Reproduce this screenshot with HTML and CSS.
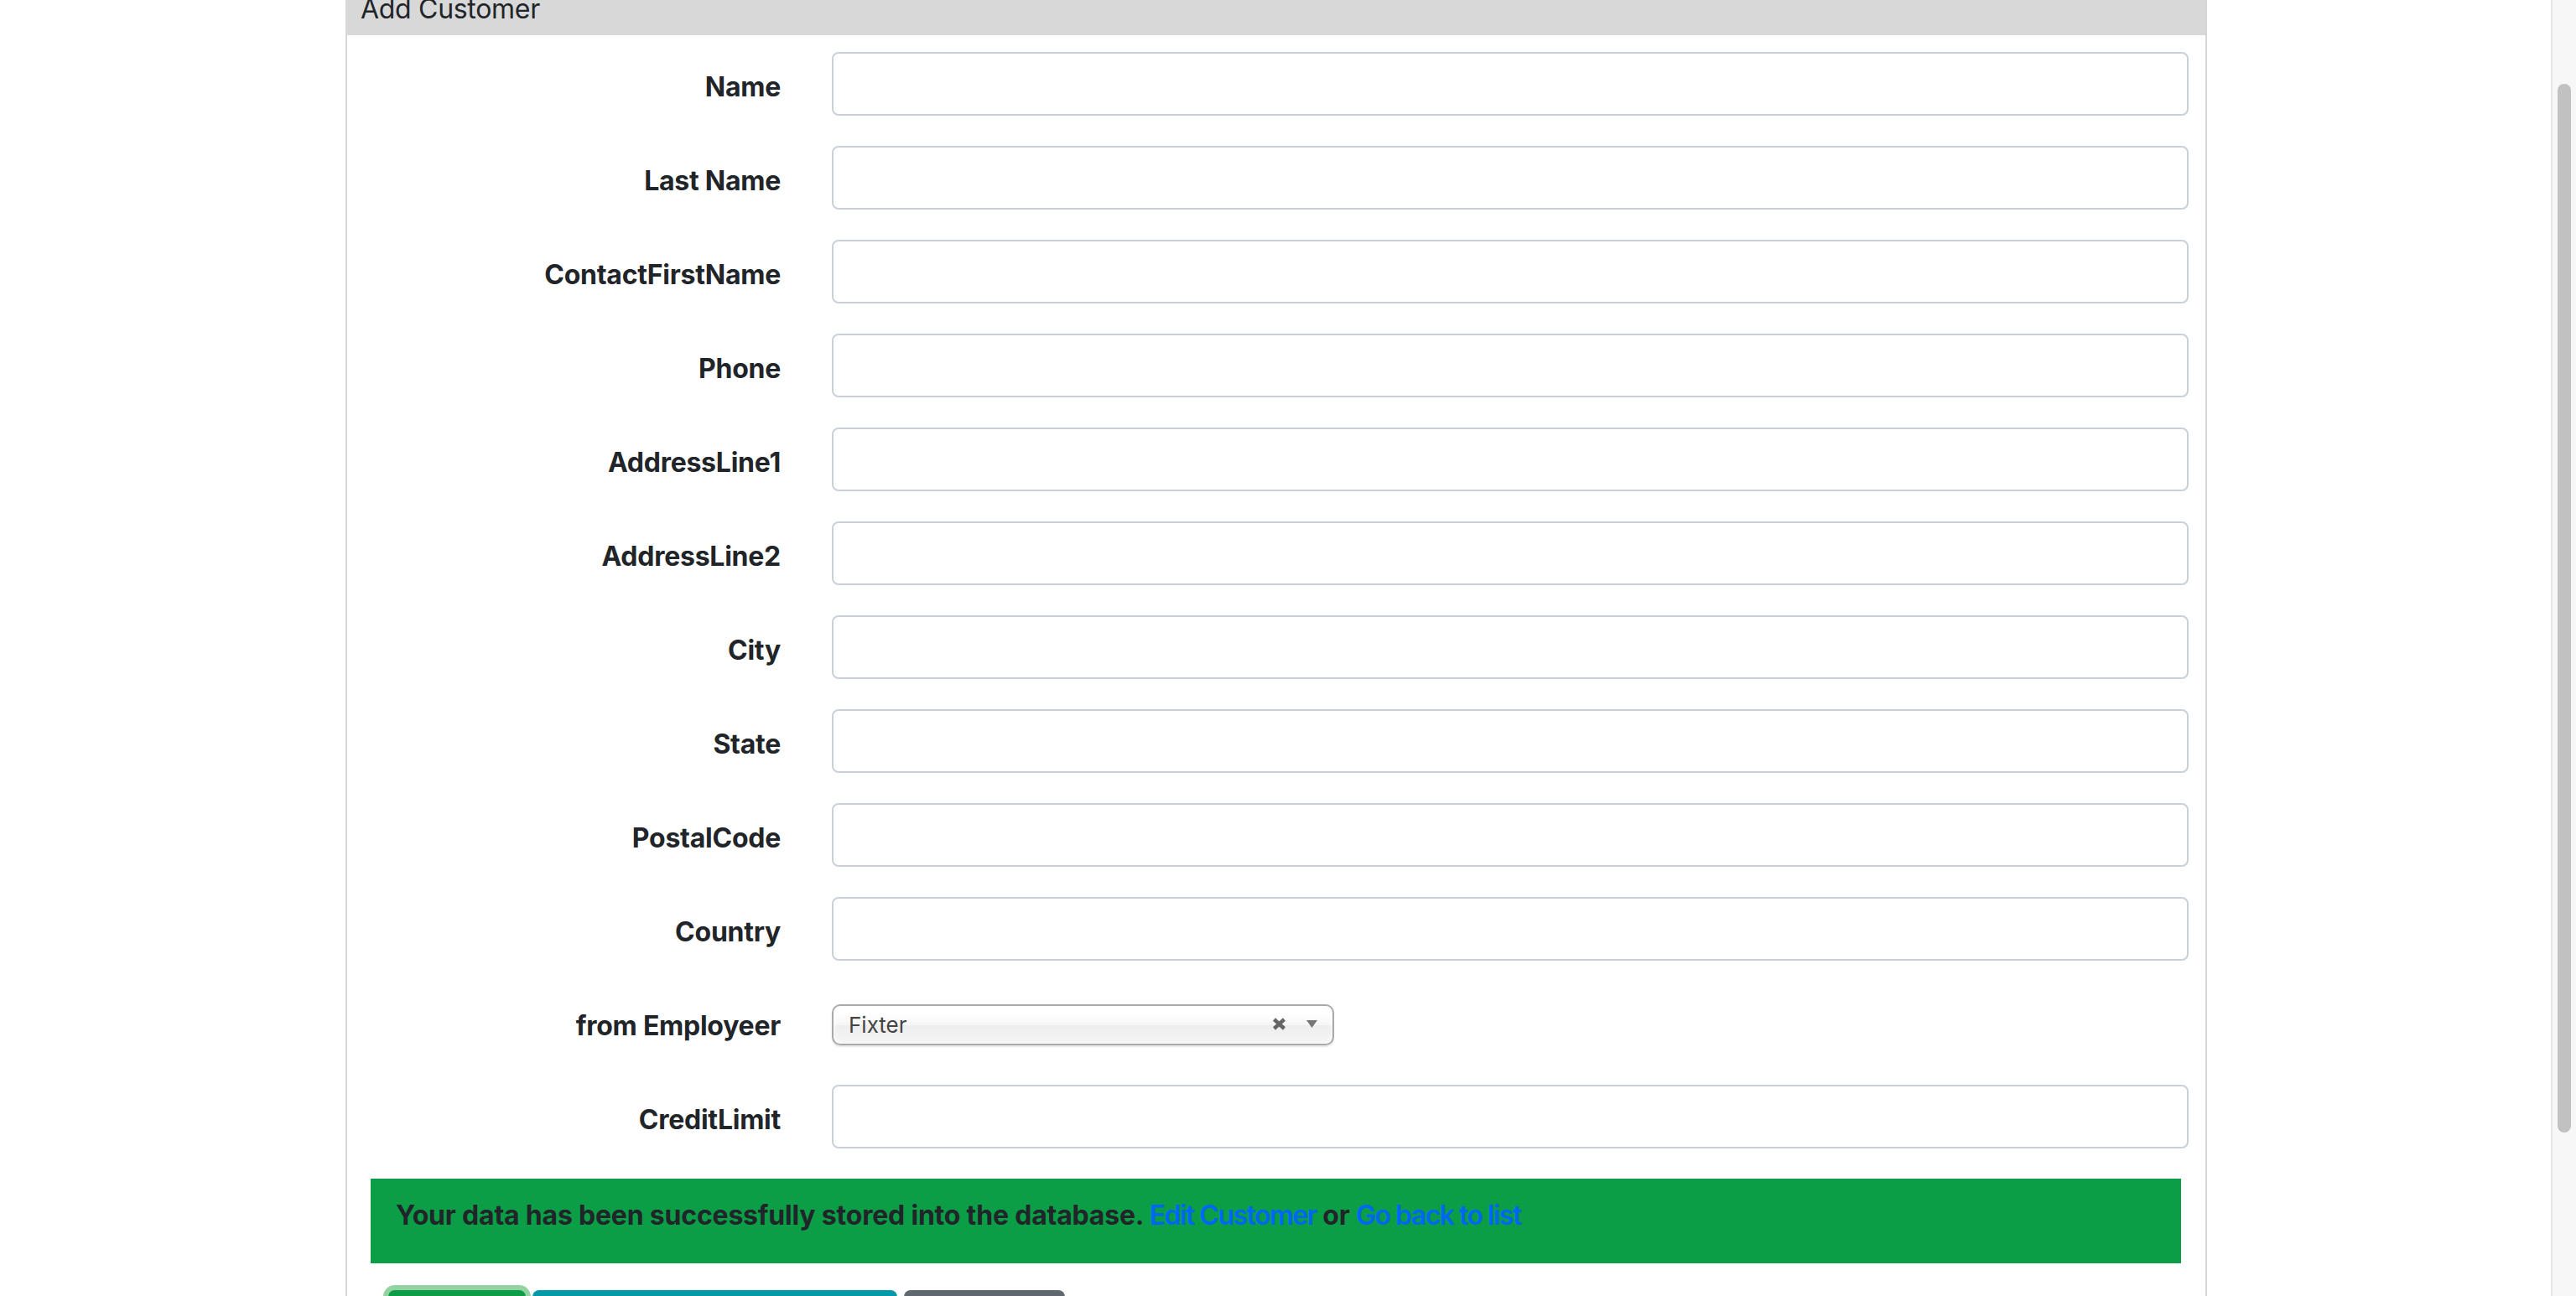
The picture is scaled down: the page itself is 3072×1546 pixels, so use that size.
FILE: index.html
```html
<!DOCTYPE html>
<html lang="en">
<head>
<meta charset="utf-8">
<title>Add Customer</title>
<link rel="stylesheet" href="styles.css">
</head>
<body>
<div class="screen">
  <main class="page">
    <section class="panel">
      <header class="panel-header"><span class="panel-title">Add Customer</span></header>
      <form class="panel-body">
        <div class="row"><label class="row-label">Name</label><div class="row-field"><input class="text-input" type="text"></div></div>
        <div class="row"><label class="row-label">Last Name</label><div class="row-field"><input class="text-input" type="text"></div></div>
        <div class="row"><label class="row-label">ContactFirstName</label><div class="row-field"><input class="text-input" type="text"></div></div>
        <div class="row"><label class="row-label">Phone</label><div class="row-field"><input class="text-input" type="text"></div></div>
        <div class="row"><label class="row-label">AddressLine1</label><div class="row-field"><input class="text-input" type="text"></div></div>
        <div class="row"><label class="row-label">AddressLine2</label><div class="row-field"><input class="text-input" type="text"></div></div>
        <div class="row"><label class="row-label">City</label><div class="row-field"><input class="text-input" type="text"></div></div>
        <div class="row"><label class="row-label">State</label><div class="row-field"><input class="text-input" type="text"></div></div>
        <div class="row"><label class="row-label">PostalCode</label><div class="row-field"><input class="text-input" type="text"></div></div>
        <div class="row"><label class="row-label">Country</label><div class="row-field"><input class="text-input" type="text"></div></div>
        <div class="row"><label class="row-label">from Employeer</label>
          <div class="row-field">
            <div class="chosen">
              <span class="chosen-text">Fixter</span>
              <svg class="chosen-clear" width="17" height="15" viewBox="0 0 17 15"><path d="M2.5 2 L14.5 13 M14.5 2 L2.5 13" stroke="#666666" stroke-width="4.5" stroke-linecap="butt"/></svg>
              <svg class="chosen-arrow" width="13" height="9" viewBox="0 0 13 9"><path d="M0 0 H13 L6.5 9 Z" fill="#777777"/></svg>
            </div>
          </div>
        </div>
        <div class="row"><label class="row-label">CreditLimit</label><div class="row-field"><input class="text-input" type="text"></div></div>
        <div class="alert">Your data has been successfully stored into the database. <a class="alert-link" href="#">Edit Customer</a> or <a class="alert-link" href="#">Go back to list</a></div>
        <div class="actions">
          <button class="btn btn-save" type="button">Save</button>
          <button class="btn btn-info" type="button">Save and go back to list</button>
          <button class="btn btn-cancel" type="button">Cancel</button>
        </div>
      </form>
    </section>
  </main>
  <aside class="scrollbar"><div class="scroll-thumb"></div></aside>
</div>
</body>
</html>
```
FILE: styles.css
```css
html, body {
  margin: 0;
  padding: 0;
  height: 100%;
  overflow: hidden;
  background: #ffffff;
}
body {
  font-family: Inter, "Liberation Sans", sans-serif;
  color: #212529;
}
.screen {
  display: flex;
  height: 100vh;
}
.page {
  flex: 1;
  padding-left: 412px;
  overflow: hidden;
}
.panel {
  width: 2220px;
  box-sizing: border-box;
  border-left: 2px solid #d6d6d6;
  border-right: 2px solid #d6d6d6;
  min-height: 1700px;
}
.panel-header {
  height: 42px;
  background: #d8d8d8;
  padding-left: 18px;
  overflow: hidden;
  margin-left: -2px;
}
.panel-title {
  display: block;
  margin-top: -3px;
  font-size: 32px;
  line-height: 28px;
  font-weight: 400;
  letter-spacing: -0.3px;
  color: #212529;
}
.panel-body {
  display: flex;
  flex-direction: column;
  padding: 20px 20px 0 0;
}
.row {
  display: flex;
  height: 76px;
  margin-bottom: 36px;
}
.row-label {
  width: 547px;
  flex: none;
  box-sizing: border-box;
  padding: 18px 30px 10px 0;
  text-align: right;
  font-size: 32px;
  line-height: 48px;
  font-weight: 700;
  letter-spacing: -0.25px;
  color: #212529;
}
.row-field {
  flex: 1;
  padding-left: 31px;
}
.text-input {
  display: block;
  width: 100%;
  height: 76px;
  box-sizing: border-box;
  border: 2px solid #c9d1d6;
  border-radius: 8px;
  background: #fff;
  margin: 0;
  padding: 0 24px;
  font-family: inherit;
  font-size: 32px;
}
.chosen {
  margin-top: 16px;
  width: 599px;
  height: 49px;
  box-sizing: border-box;
  border: 2px solid #aaaaaa;
  border-radius: 10px;
  background: linear-gradient(#ffffff 20%, #f6f6f6 50%, #eeeeee 52%, #f4f4f4 100%);
  box-shadow: inset 0 0 6px #ffffff, 0 2px 2px rgba(0, 0, 0, 0.1);
  display: flex;
  align-items: center;
  padding: 0 18px 0 18px;
}
.chosen-text {
  font-size: 26px;
  line-height: 45px;
  color: #444444;
  flex: 1;
}
.chosen-clear {
  margin-right: 24px;
  margin-top: -2px;
}
.chosen-arrow {
  margin-top: -2px;
}
.alert {
  margin: 0 9px 0 28px;
  background: #0b9e47;
  padding: 20px 30px 33px;
  font-size: 32px;
  line-height: 48px;
  font-weight: 700;
  letter-spacing: -0.2px;
  color: #212529;
}
.alert-link {
  color: #0066f5;
  font-weight: 600;
  letter-spacing: -1.5px;
  text-decoration: none;
}
.actions {
  display: flex;
  gap: 8px;
  margin: 32px 0 0 49px;
}
.btn {
  height: 76px;
  border: none;
  border-radius: 8px;
  font-family: inherit;
  font-size: 32px;
  color: #ffffff;
  padding: 0 24px;
  margin: 0;
}
.btn-save {
  width: 164px;
  background: #0e9d47;
  box-shadow: 0 0 0 6px #93d3a2;
}
.btn-info {
  width: 435px;
  background: #0399a8;
}
.btn-cancel {
  width: 192px;
  background: #5f686e;
}
.scrollbar {
  width: 30px;
  flex: none;
  box-sizing: border-box;
  border-left: 2px solid #e6e6e6;
  background: #f7f7f7;
  padding: 100px 0 0 6px;
}
.scroll-thumb {
  width: 16px;
  height: 1251px;
  border-radius: 8px;
  background: #c1c1c1;
}
```
